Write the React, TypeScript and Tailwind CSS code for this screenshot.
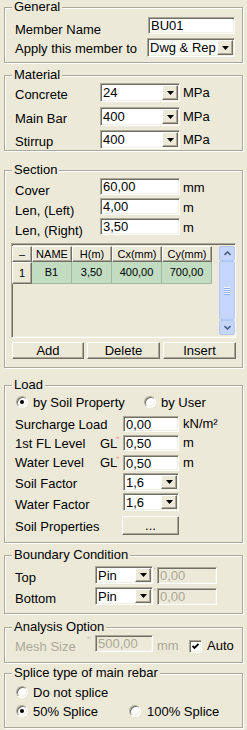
import type { ReactNode } from "react"

const sunken =
  "border border-t-[#aca899] border-l-[#aca899] border-b-white border-r-white shadow-[inset_1px_1px_0_#716f64,inset_-1px_-1px_0_#f1efe2]"
const raised =
  "border border-t-white border-l-white border-b-[#716f64] border-r-[#716f64] shadow-[inset_-1px_-1px_0_#aca899]"

function Group({ title, className, children }: { title: string; className?: string; children: ReactNode }) {
  return (
    <fieldset
      className={`w-[239px] border border-[#aca899] pl-[10px] shadow-[inset_1px_1px_0_#fff,1px_1px_0_#fff] ${className ?? ""}`}
    >
      <legend className="-ml-[3px] bg-[#ece9d8] px-[2px] leading-[14px]">{title}</legend>
      {children}
    </fieldset>
  )
}

function DropBtn() {
  return (
    <span className={`${raised} flex w-[16px] shrink-0 items-center justify-center bg-[#ece9d8]`}>
      <svg width="7" height="4" viewBox="0 0 7 4">
        <path d="M0 0h7L3.5 4z" fill="#000" />
      </svg>
    </span>
  )
}

function Combo({ value, className }: { value: string; className?: string }) {
  return (
    <div className={`${sunken} flex bg-white p-[1px] ${className ?? ""}`}>
      <span className="flex-1 pl-[1px] leading-[15px]">{value}</span>
      <DropBtn />
    </div>
  )
}

function Edit({ value, className, disabled }: { value: string; className?: string; disabled?: boolean }) {
  return (
    <div
      className={`${sunken} ${disabled ? "bg-[#ece9d8] text-[#aca899]" : "bg-white"} pl-[2px] leading-[15px] ${className ?? ""}`}
    >
      {value}
    </div>
  )
}

function Radio({ checked }: { checked?: boolean }) {
  return (
    <span
      className={`${sunken} flex h-[12px] w-[12px] shrink-0 items-center justify-center rounded-full bg-white`}
    >
      {checked && <span className="h-[4px] w-[4px] rounded-full bg-black" />}
    </span>
  )
}

function Star({ gray }: { gray?: boolean }) {
  return (
    <span className={`w-[7px] self-start text-[9px] leading-[9px] ${gray ? "text-[#c8c5b8]" : "text-[#f39c9c]"}`}>*</span>
  )
}

function ScrollBtn({ up }: { up?: boolean }) {
  return (
    <div className="flex h-[15px] items-center justify-center rounded-[2px] border border-[#b4c8f6] bg-[#c6d5fc]">
      <svg width="7" height="5" viewBox="0 0 7 5">
        <path
          d={up ? "M0.5 4L3.5 1L6.5 4" : "M0.5 1L3.5 4L6.5 1"}
          fill="none"
          stroke="#4d6185"
          strokeWidth="1.6"
        />
      </svg>
    </div>
  )
}

function Button({ label, className }: { label: string; className?: string }) {
  return (
    <div className={`${raised} flex items-center justify-center bg-[#ece9d8] leading-[15px] ${className ?? ""}`}>
      {label}
    </div>
  )
}

const cols = [
  { w: "w-[40px]", head: "NAME", val: "B1" },
  { w: "w-[40px]", head: "H(m)", val: "3,50" },
  { w: "w-[50px]", head: "Cx(mm)", val: "400,00" },
  { w: "w-[50px]", head: "Cy(mm)", val: "700,00" },
]

export default function App() {
  return (
    <div className="min-h-[730px] w-[247px] bg-[#ece9d8] pl-[4px] text-[13px] text-black font-['Liberation_Sans',Arial,sans-serif]">
      {/* General */}
      <Group title="General" className="pb-[5px]">
        <div className="mt-[3px] flex h-[17px] items-start">
          <span className="mt-[5px] w-[133px] leading-[15px]">Member Name</span>
          <Edit value="BU01" className="h-[17px] w-[87px]" />
        </div>
        <div className="mt-[4px] flex h-[19px] items-start">
          <span className="mt-[3px] w-[132px] leading-[15px]">Apply this member to</span>
          <Combo value="Dwg & Rep" className="h-[19px] w-[88px]" />
        </div>
      </Group>

      {/* Material */}
      <Group title="Material" className="mt-[5px] pb-[1px]">
        {[
          ["Concrete", "24", "mt-[1px]"],
          ["Main Bar", "400", "mt-[5px]"],
          ["Stirrup", "400", "mt-[4px]"],
        ].map(([label, val, mt]) => (
          <div key={label} className={`${mt} flex h-[19px] items-start`}>
            <span className="mt-[4px] w-[85px] leading-[15px]">{label}</span>
            <Combo value={val} className="h-[19px] w-[80px]" />
            <span className="ml-[3px] mt-[2px] leading-[15px]">MPa</span>
          </div>
        ))}
      </Group>

      {/* Section */}
      <Group title="Section" className="mt-[12px] pb-[8px]">
        {[
          ["Cover", "60,00", "mm", "mt-[1px]"],
          ["Len, (Left)", "4,00", "m", "mt-[3px]"],
          ["Len, (Right)", "3,50", "m", "mt-[3px]"],
        ].map(([label, val, unit, mt]) => (
          <div key={label} className={`${mt} flex h-[17px] items-start`}>
            <span className="mt-[5px] w-[85px] leading-[15px]">{label}</span>
            <Edit value={val} className="h-[17px] w-[80px]" />
            <span className="ml-[3px] mt-[2px] leading-[15px]">{unit}</span>
          </div>
        ))}

        <div className={`${sunken} -ml-[4px] mt-[8px] flex h-[95px] w-[225px] justify-between py-[2px] text-[11px]`}>
          <div className="flex flex-col">
            <div className="flex h-[16px]">
              <div className={`${raised} flex w-[20px] items-center justify-center bg-[#ece9d8]`}>–</div>
              {cols.map((c) => (
                <div key={c.head} className={`${raised} flex ${c.w} items-center justify-center bg-[#ece9d8]`}>
                  {c.head}
                </div>
              ))}
            </div>
            <div className="flex h-[22px]">
              <div className={`${raised} flex w-[20px] items-center justify-center bg-[#ece9d8]`}>1</div>
              {cols.map((c) => (
                <div
                  key={c.head}
                  className={`flex ${c.w} items-center justify-center border-b border-r border-[#a3b8a3] bg-[#c1dcc1]`}
                >
                  {c.val}
                </div>
              ))}
            </div>
          </div>
          <div className="flex w-[16px] flex-col">
            <ScrollBtn up />
            <div className="flex flex-1 flex-col items-center justify-center gap-[1px] rounded-[2px] border border-[#b4c8f6] bg-[#c6d5fc]">
              {[0, 1, 2, 3].map((i) => (
                <div key={i} className="h-[1px] w-[6px] bg-[#eef3fe] shadow-[0_1px_0_#8eaef2]" />
              ))}
            </div>
            <ScrollBtn />
          </div>
        </div>

        <div className="-ml-[3px] mt-[4px] flex gap-[3px]">
          <Button label="Add" className="h-[17px] w-[72px]" />
          <Button label="Delete" className="h-[17px] w-[73px]" />
          <Button label="Insert" className="h-[17px] w-[73px]" />
        </div>
      </Group>

      {/* Load */}
      <Group title="Load" className="mt-[10px] pb-[7px]">
        <div className="mt-[2px] flex h-[16px] items-center">
          <div className="flex w-[129px] items-center gap-[5px] pl-[1px]">
            <Radio checked />
            <span className="leading-[15px]">by Soil Property</span>
          </div>
          <div className="flex items-center gap-[5px]">
            <Radio />
            <span className="leading-[15px]">by User</span>
          </div>
        </div>
        <div className="mt-[6px] flex h-[16px] items-start">
          <span className="mt-[1px] w-[108px] leading-[15px]">Surcharge Load</span>
          <Edit value="0,00" className="h-[16px] w-[56px]" />
          <span className="ml-[4px] leading-[15px]">kN/m²</span>
        </div>
        {[
          ["1st FL Level", "mt-[3px]", "mt-[1px]"],
          ["Water Level", "mt-[4px]", "mt-0"],
        ].map(([label, mt, lmt]) => (
          <div key={label} className={`${mt} flex h-[16px] items-start`}>
            <span className={`${lmt} w-[85px] leading-[15px]`}>{label}</span>
            <span className={`${lmt} w-[16px] leading-[15px]`}>GL</span>
            <Star />
            <Edit value="0,50" className="h-[16px] w-[56px]" />
            <span className="ml-[4px] leading-[15px]">m</span>
          </div>
        ))}
        <div className="mt-[2px] flex h-[18px] items-start">
          <span className="mt-[3px] w-[108px] leading-[15px]">Soil Factor</span>
          <Combo value="1,6" className="h-[18px] w-[56px]" />
        </div>
        <div className="mt-[2px] flex h-[18px] items-start">
          <span className="mt-[4px] w-[108px] leading-[15px]">Water Factor</span>
          <Combo value="1,6" className="h-[18px] w-[56px]" />
        </div>
        <div className="mt-[5px] flex h-[19px] items-start">
          <span className="mt-[3px] w-[107px] leading-[15px]">Soil Properties</span>
          <Button label="..." className="h-[19px] w-[57px]" />
        </div>
      </Group>

      {/* Boundary Condition */}
      <Group title="Boundary Condition" className="mt-[5px] pb-[8px]">
        {[
          ["Top", "mt-[4px]"],
          ["Bottom", "mt-[3px]"],
        ].map(([label, mt]) => (
          <div key={label} className={`${mt} flex h-[18px] items-start`}>
            <span className="mt-[4px] w-[80px] leading-[15px]">{label}</span>
            <Combo value="Pin" className="h-[18px] w-[58px]" />
            <span className="w-[4px] self-start text-[8px] leading-[8px] text-[#c8c5b8]">*</span>
            <Edit value="0,00" disabled className="mt-[1px] h-[17px] w-[60px]" />
          </div>
        ))}
      </Group>

      {/* Analysis Option */}
      <Group title="Analysis Option" className="mt-[6px] pb-[10px]">
        <div className="mt-[1px] flex h-[17px] items-start text-[#aca899]">
          <span className="mt-[4px] w-[72px] leading-[15px]">Mesh Size</span>
          <Star gray />
          <span className="w-[1px]" />
          <Edit value="500,00" disabled className="h-[17px] w-[58px]" />
          <span className="ml-[4px] mt-[3px] w-[32px] leading-[15px]">mm</span>
          <span className={`${sunken} mt-[5px] flex h-[13px] w-[13px] items-center justify-center bg-white`}>
            <svg width="7" height="7" viewBox="0 0 7 7">
              <path d="M0.5 3L2.5 5L6.5 1" fill="none" stroke="#000" strokeWidth="1.8" />
            </svg>
          </span>
          <span className="ml-[5px] mt-[3px] leading-[15px] text-black">Auto</span>
        </div>
      </Group>

      {/* Splice */}
      <Group title="Splice type of main rebar" className="mt-[3px] pb-[8px]">
        <div className="mt-[4px] flex h-[16px] items-center gap-[5px] pl-[1px]">
          <Radio />
          <span className="leading-[15px]">Do not splice</span>
        </div>
        <div className="mt-[3px] flex h-[16px] items-center">
          <div className="flex w-[114px] items-center gap-[5px] pl-[1px]">
            <Radio checked />
            <span className="leading-[15px]">50% Splice</span>
          </div>
          <div className="flex items-center gap-[6px]">
            <Radio />
            <span className="leading-[15px]">100% Splice</span>
          </div>
        </div>
      </Group>
    </div>
  )
}
